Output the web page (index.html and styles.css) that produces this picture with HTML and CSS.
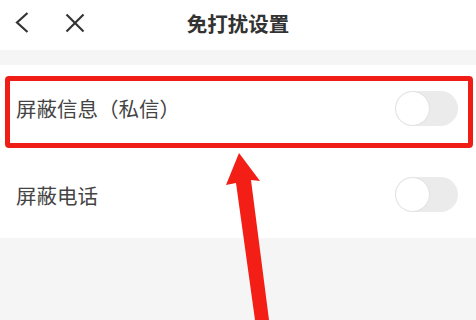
FILE: index.html
```html
<!DOCTYPE html>
<html>

<head>
    <meta charset="UTF-8">
    <title>免打扰设置</title>
    <link rel="stylesheet" href="styles.css">
</head>

<body>
    <div class="page">
        <div class="header">
            <div class="nav">
                <svg class="icon-back" width="14" height="21" viewBox="0 0 14 21">
                    <polyline points="12.5,1 2,10.5 12.5,20" fill="none" stroke="#333" stroke-width="2.2" />
                </svg>
                <svg class="icon-close" width="20" height="20" viewBox="0 0 20 20">
                    <line x1="1.5" y1="1.5" x2="18.5" y2="18.5" stroke="#333" stroke-width="2.2" />
                    <line x1="18.5" y1="1.5" x2="1.5" y2="18.5" stroke="#333" stroke-width="2.2" />
                </svg>
            </div>
            <div class="title">免打扰设置</div>
            <div></div>
        </div>

        <div class="gap"></div>

        <ul class="list">
            <li class="row row-marked">
                <span class="label">屏蔽信息（私信）</span>
                <span class="switch"><span class="knob"></span></span>
                <!-- 标注框 -->
                <span class="mark"></span>
            </li>
            <li class="row">
                <span class="label">屏蔽电话</span>
                <span class="switch"><span class="knob"></span></span>
            </li>
        </ul>

        <!-- 标注箭头 -->
        <svg class="arrow" width="476" height="320" viewBox="0 0 476 320">
            <polygon points="239,153 260,181 251,180 269,320 255,320 236,183 226,185" fill="#f31e16" />
        </svg>
    </div>
</body>

</html>
```

FILE: styles.css
```css
* {
    margin: 0;
    padding: 0;
}

body {
    background: #f5f5f5;
    font-family: "Noto Sans CJK SC", sans-serif;
    color: #333;
}

.page {
    width: 476px;
    height: 320px;
    position: relative;
    overflow: hidden;
}

.header {
    height: 50px;
    padding-bottom: 5px;
    box-sizing: border-box;
    background: #fff;
    display: grid;
    grid-template-columns: 1fr auto 1fr;
    align-items: center;
}

.nav {
    display: flex;
    align-items: center;
    padding-left: 15px;
}

.icon-back {
    display: block;
}

.icon-close {
    display: block;
    margin-left: 36px;
}

.title {
    font-size: 20.5px;
    font-weight: 600;
    color: #333;
}

.gap {
    height: 15px;
}

.list {
    list-style-type: none;
    background: #fff;
}

.row {
    height: 86.5px;
    display: flex;
    align-items: center;
    justify-content: space-between;
    padding: 0 18px 0 16px;
    position: relative;
}

.label {
    font-size: 20.5px;
    color: #444;
}

.switch {
    width: 63px;
    height: 35px;
    border-radius: 18px;
    background: #ebebeb;
    position: relative;
}

.knob {
    position: absolute;
    left: 1px;
    top: 1px;
    width: 33px;
    height: 33px;
    border-radius: 50%;
    background: #fff;
    box-shadow: 0 0 2px rgba(0, 0, 0, 0.12);
}

.mark {
    position: absolute;
    left: 5px;
    top: 11px;
    width: 468px;
    height: 72px;
    box-sizing: border-box;
    border: 5px solid #f01d17;
    border-radius: 4px;
}

.arrow {
    position: absolute;
    left: 0;
    top: 0;
    pointer-events: none;
}
```
